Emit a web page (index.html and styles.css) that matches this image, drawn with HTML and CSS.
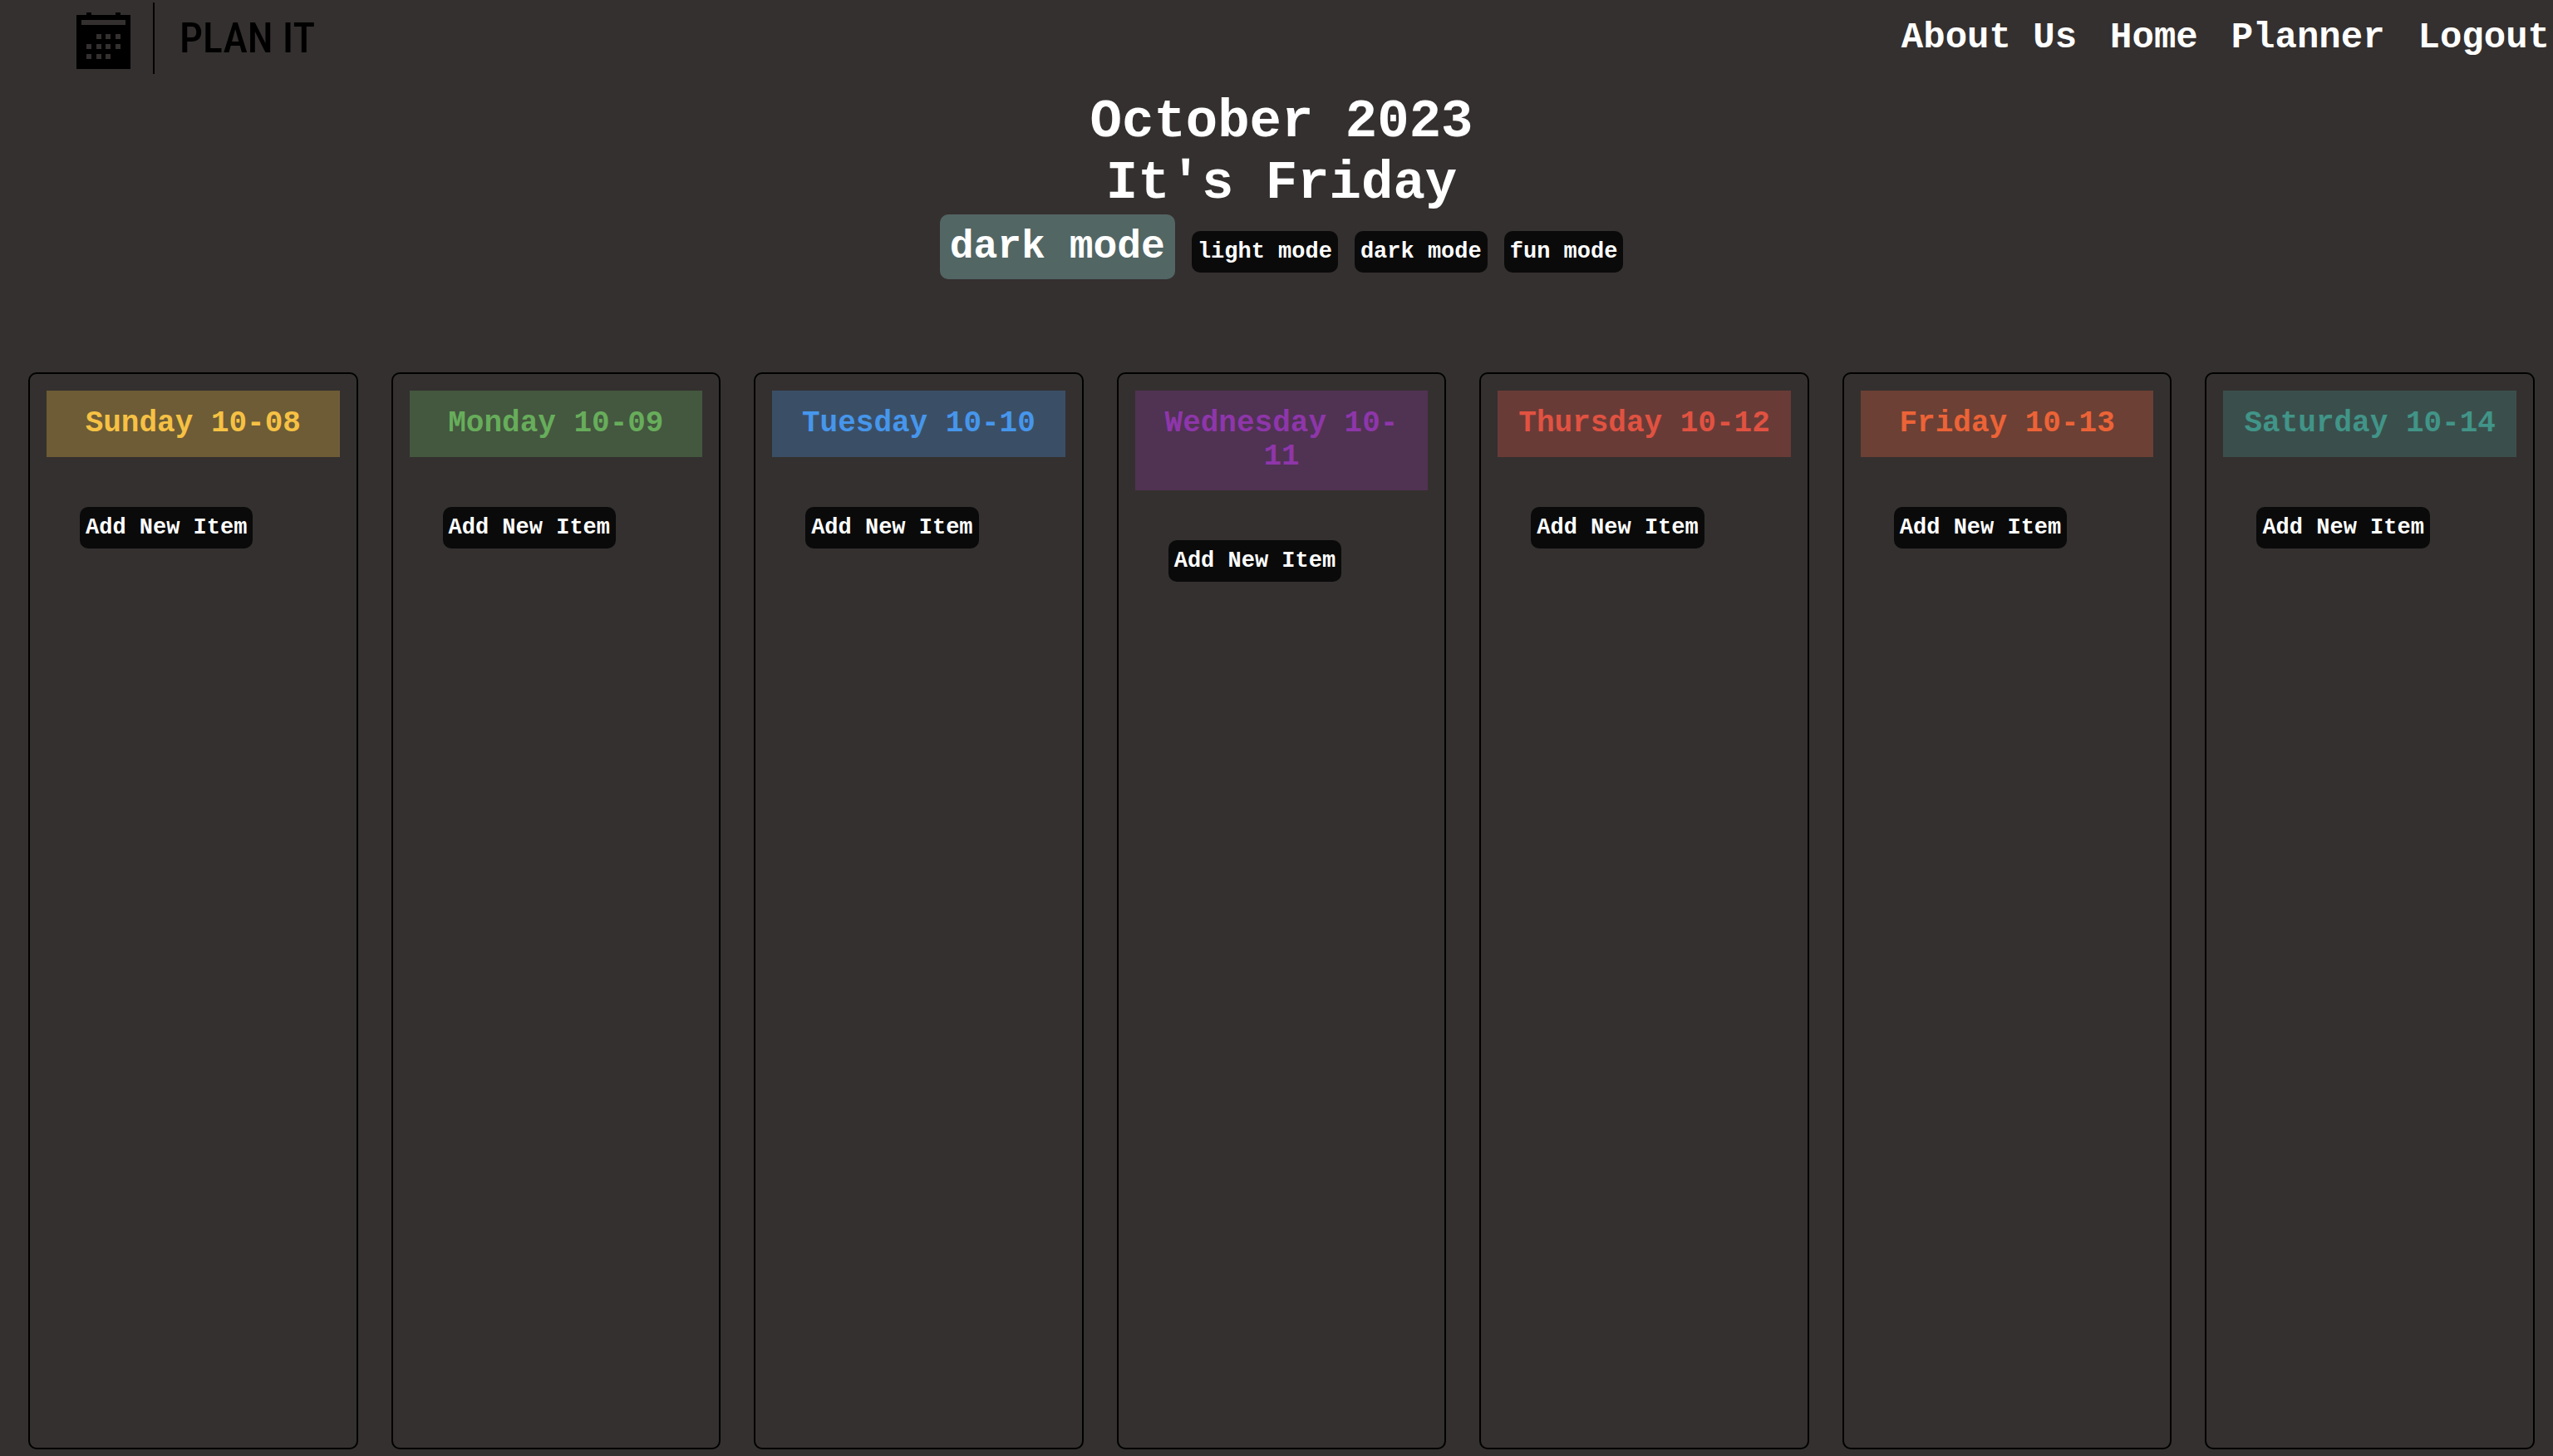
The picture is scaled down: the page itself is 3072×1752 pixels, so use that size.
FILE: index.html
```html
<!DOCTYPE html>
<html lang="en">
<head>
<meta charset="utf-8">
<meta name="viewport" content="width=device-width, initial-scale=1">
<title>Plan It</title>
<link rel="stylesheet" href="styles.css">
</head>
<body>
<header class="topbar">
  <div class="logo">
    <svg class="logo-icon" width="66" height="68" viewBox="0 0 66 68" aria-hidden="true">
      <path fill-rule="evenodd" d="M0 3H12V0H18V3H47V0H53V3H65V68H0ZM6 9V15H59V9ZM24 26V32H30V26ZM35 26V32H41V26ZM47 26V32H53V26ZM12 38V44H18V38ZM24 38V44H30V38ZM35 38V44H41V38ZM47 38V44H53V38ZM12 50V56H18V50ZM24 50V56H30V50ZM35 50V56H41V50Z"/>
    </svg>
    <span class="logo-rule"></span>
    <span class="logo-text">PLAN IT</span>
  </div>
  <nav class="nav">
    <a href="#about">About Us</a>
    <a href="#home">Home</a>
    <a href="#planner">Planner</a>
    <a href="#logout">Logout</a>
  </nav>
</header>
<main>
  <section class="intro">
    <h1 class="title">October 2023</h1>
    <h1 class="title">It's Friday</h1>
    <div class="modes">
      <span class="current-mode">dark mode</span>
      <button class="btn" type="button">light mode</button>
      <button class="btn" type="button">dark mode</button>
      <button class="btn" type="button">fun mode</button>
    </div>
  </section>
  <section class="week">
    <article class="day"><h2 class="day-name sunday">Sunday 10-08</h2><button class="btn add" type="button">Add New Item</button></article>
    <article class="day"><h2 class="day-name monday">Monday 10-09</h2><button class="btn add" type="button">Add New Item</button></article>
    <article class="day"><h2 class="day-name tuesday">Tuesday 10-10</h2><button class="btn add" type="button">Add New Item</button></article>
    <article class="day"><h2 class="day-name wednesday">Wednesday 10-11</h2><button class="btn add" type="button">Add New Item</button></article>
    <article class="day"><h2 class="day-name thursday">Thursday 10-12</h2><button class="btn add" type="button">Add New Item</button></article>
    <article class="day"><h2 class="day-name friday">Friday 10-13</h2><button class="btn add" type="button">Add New Item</button></article>
    <article class="day"><h2 class="day-name saturday">Saturday 10-14</h2><button class="btn add" type="button">Add New Item</button></article>
  </section>
</main>
</body>
</html>
```
FILE: styles.css
```css
* {
  box-sizing: border-box;
}

body {
  margin: 0;
  min-height: 100vh;
  display: flex;
  flex-direction: column;
  background: #34302f;
  color: #fff;
  font-family: "Liberation Mono", "Courier New", monospace;
  font-weight: 700;
}

main {
  flex: 1;
  display: flex;
  flex-direction: column;
}

.topbar {
  display: flex;
  justify-content: space-between;
  align-items: flex-start;
  height: 110px;
}

.logo {
  display: flex;
  align-items: center;
  height: 92px;
  padding-left: 92px;
}

.logo-icon {
  margin-top: 6px;
  fill: #000;
}

.logo-rule {
  width: 2px;
  height: 86px;
  margin: 0 30px 0 26px;
  background: #000;
}

.logo-text {
  color: #000;
  font: 500 50px/60px "Roboto Condensed", "Roboto", sans-serif;
}

.nav {
  display: flex;
  gap: 40px;
  padding: 20px 4px 0 0;
  font-size: 44px;
  line-height: 50px;
}

.nav a {
  color: inherit;
  text-decoration: none;
}

.intro {
  padding-left: 12px;
  text-align: center;
}

.title {
  margin: 0;
  font-size: 64px;
  line-height: 74px;
}

.modes {
  display: flex;
  justify-content: center;
  align-items: baseline;
  gap: 20px;
}

.current-mode {
  padding: 12px;
  border-radius: 10px;
  background: #526664;
  font-size: 48px;
  line-height: 54px;
}

.btn {
  height: 50px;
  padding: 0 7px;
  border: 0;
  border-radius: 10px;
  background: #0a0a0a;
  color: #fff;
  font: inherit;
  font-size: 27px;
  line-height: 50px;
}

.week {
  flex: 1;
  display: grid;
  grid-template-columns: repeat(7, minmax(0, 1fr));
  gap: 40px;
  padding: 112px 22px 8px 34px;
}

.day {
  padding: 20px;
  border: 2px solid #000;
  border-radius: 10px;
}

.day-name {
  margin: 0 0 60px;
  padding: 20px;
  font-size: 36px;
  line-height: 40px;
  text-align: center;
}

.add {
  margin-left: 40px;
}

.sunday { background: #6d5c36; color: #f6c144; }
.monday { background: #44573f; color: #67ad5b; }
.tuesday { background: #3a4f66; color: #4696ec; }
.wednesday { background: #503253; color: #8e36aa; }
.thursday { background: #693b37; color: #e15241; }
.friday { background: #6c4034; color: #ec6337; }
.saturday { background: #3a4f4b; color: #419488; }
```
